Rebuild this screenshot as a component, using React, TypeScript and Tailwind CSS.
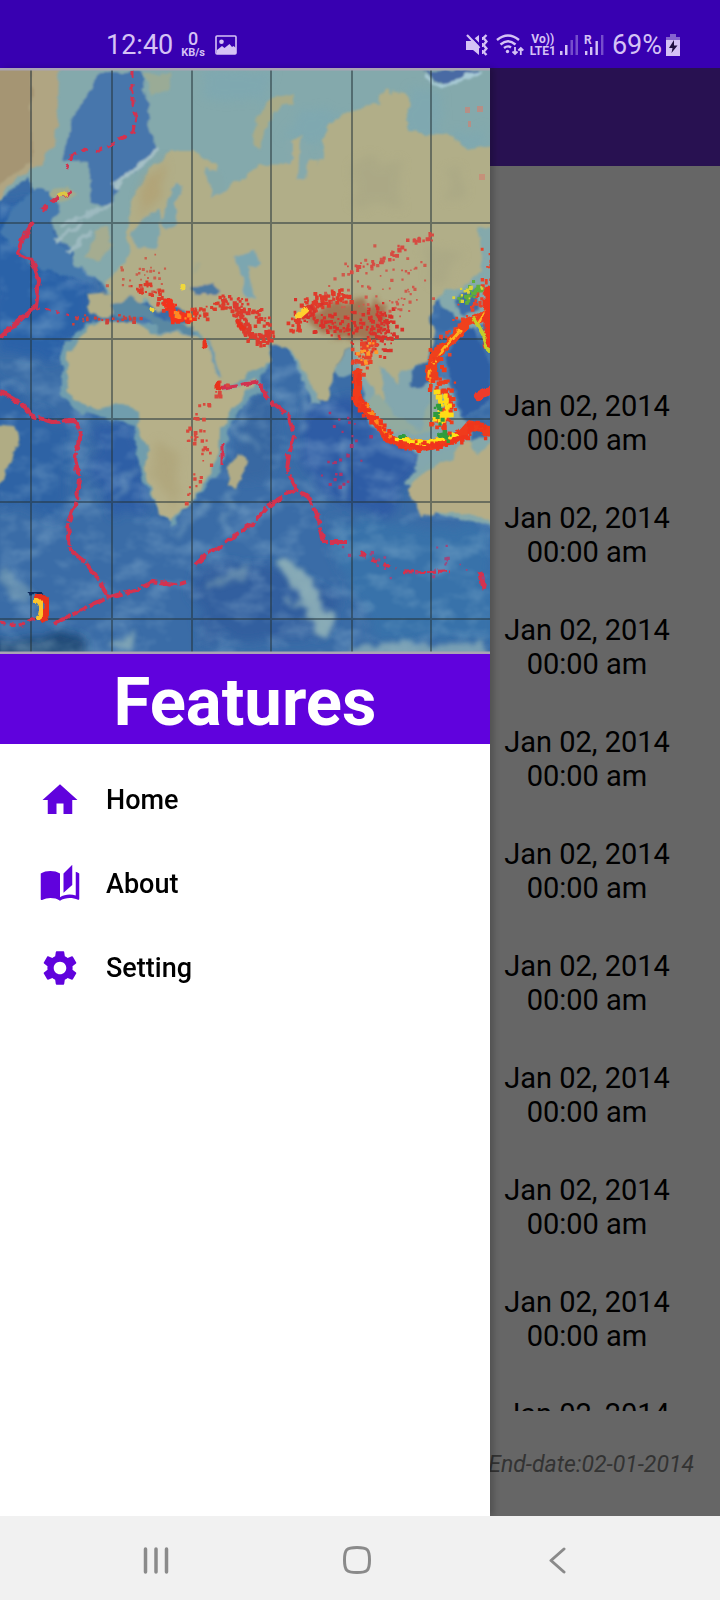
import React from "react";
import { MdAutoStories, MdHome, MdSettings } from "react-icons/md";

type Point = [number, number];

function createRandom(seed: number) {
  let state = seed;
  return () => {
    state = (state * 1664525 + 1013904223) % 4294967296;
    return state / 4294967296;
  };
}

// Small squares spread around a polyline, joined into a single path.
function scatter(line: Point[], count: number, spread: number, size: number, seed: number) {
  const random = createRandom(seed);
  let d = "";
  for (let i = 0; i < count; i++) {
    const t = random() * (line.length - 1);
    const k = Math.floor(t);
    const f = t - k;
    const [ax, ay] = line[k];
    const [bx, by] = line[Math.min(k + 1, line.length - 1)];
    const x = ax + (bx - ax) * f + (random() + random() - 1) * spread;
    const y = ay + (by - ay) * f + (random() + random() - 1) * spread;
    const s = size * (0.6 + random() * 0.8);
    d += `M${x.toFixed(1)} ${y.toFixed(1)}h${s.toFixed(1)}v${s.toFixed(1)}h-${s.toFixed(1)}z`;
  }
  return d;
}

const mediterranean: Point[] = [[135, 288], [150, 288], [162, 300], [172, 313], [190, 316], [205, 310], [225, 300], [240, 318], [250, 335]];
const northAfrica: Point[] = [[75, 318], [104, 318], [125, 318], [140, 318]];
const persia: Point[] = [[225, 298], [238, 310], [246, 330], [262, 341], [268, 330], [258, 312], [235, 300]];
const pamir: Point[] = [[290, 330], [300, 315], [312, 302], [335, 292], [345, 300]];
const tibet: Point[] = [[300, 315], [325, 325], [350, 328], [375, 315], [385, 330], [375, 345]];
const centralAsia: Point[] = [[335, 290], [350, 270], [390, 260], [420, 280], [400, 310], [360, 300]];
const baikal: Point[] = [[345, 270], [385, 258], [405, 242], [432, 235]];
const burma: Point[] = [[372, 345], [360, 350], [360, 370]];
const eastAfrica: Point[] = [[218, 385], [212, 400], [193, 420], [190, 435], [205, 440], [200, 475], [185, 500]];
const indianOcean: Point[] = [[320, 420], [345, 430], [370, 450], [330, 455], [335, 490]];
const japan: Point[] = [[488, 255], [487, 290], [465, 310], [450, 335], [432, 355]];
const alps: Point[] = [[110, 285], [130, 270], [155, 265], [145, 285]];
const sundaArc: Point[] = [[358, 370], [357, 400], [372, 417], [386, 436], [402, 444], [425, 447], [450, 441], [462, 434], [470, 425], [490, 431]];
const philippines: Point[] = [[434, 356], [430, 378], [444, 390], [448, 412], [436, 424]];
const southernRidge: Point[] = [[347, 542], [370, 560], [410, 575], [450, 565], [440, 545], [485, 580]];

const scatters = [
  { d: scatter(mediterranean, 150, 8, 2.8, 3), fill: "#dc3d2c" },
  { d: scatter(northAfrica, 26, 6, 2.8, 17), fill: "#cf4038" },
  { d: scatter([[165, 300], [175, 317], [190, 316]], 75, 6, 3.4, 9), fill: "#f5321c" },
  { d: scatter([[172, 314], [190, 316]], 10, 5, 3, 19), fill: "#ff8a24" },
  { d: scatter(persia, 120, 8, 3, 4), fill: "#dd3a2e" },
  { d: scatter(pamir, 110, 9, 3.2, 5), fill: "#e03a2c" },
  { d: scatter(tibet, 190, 18, 2.8, 6), fill: "#d8332c" },
  { d: scatter(centralAsia, 80, 24, 2.4, 7), fill: "#cf5a4c" },
  { d: scatter(baikal, 40, 5, 3, 8), fill: "#d64b43" },
  { d: scatter(burma, 60, 11, 3.2, 11), fill: "#e8432a" },
  { d: scatter(burma, 14, 8, 3.2, 18), fill: "#ff9a2a" },
  { d: scatter(eastAfrica, 50, 9, 2.8, 12), fill: "#d84a3c" },
  { d: scatter(indianOcean, 26, 16, 2.8, 13), fill: "#a8346a" },
  { d: scatter(japan, 80, 12, 2.8, 14), fill: "#e8432a" },
  { d: scatter(alps, 30, 14, 2.4, 15), fill: "#c9604c" },
  { d: scatter(southernRidge, 22, 10, 2.4, 16), fill: "#a0447c" },
];

const arcSpots = [
  { d: scatter(sundaArc, 110, 7, 3.4, 31), fill: "#f0351c" },
  { d: scatter(philippines, 90, 11, 3.6, 32), fill: "#ee3c1e" },
  { d: scatter([[438, 392], [448, 412], [436, 416]], 40, 7, 3.6, 33), fill: "#ffdc19" },
  { d: scatter([[438, 400], [436, 414], [446, 436]], 14, 6, 3.6, 34), fill: "#2f9c3c" },
  { d: scatter([[458, 298], [478, 286]], 26, 9, 3, 35), fill: "#5fae3a" },
  { d: scatter([[458, 298], [480, 288]], 12, 9, 2.6, 36), fill: "#dcd23a" },
];

function EarthquakeMap() {
  return (
    <svg viewBox="0 68 490 586" className="block w-full" role="img" aria-label="World earthquake map">
      <defs>
        <filter id="coast" x="-5%" y="-5%" width="110%" height="110%">
          <feTurbulence type="fractalNoise" baseFrequency="0.07" numOctaves="3" seed="4" result="n" />
          <feDisplacementMap in="SourceGraphic" in2="n" scale="11" xChannelSelector="R" yChannelSelector="G" />
          <feGaussianBlur stdDeviation="1.3" />
        </filter>
        <filter id="depth" x="-10%" y="-10%" width="120%" height="120%">
          <feTurbulence type="fractalNoise" baseFrequency="0.05" numOctaves="3" seed="8" result="n" />
          <feDisplacementMap in="SourceGraphic" in2="n" scale="22" xChannelSelector="R" yChannelSelector="G" />
          <feGaussianBlur stdDeviation="5" />
        </filter>
        <filter id="cloud" x="-20%" y="-20%" width="140%" height="140%">
          <feTurbulence type="fractalNoise" baseFrequency="0.07" numOctaves="3" seed="6" result="n" />
          <feDisplacementMap in="SourceGraphic" in2="n" scale="22" xChannelSelector="R" yChannelSelector="G" />
          <feGaussianBlur stdDeviation="2.5" />
        </filter>
        <filter id="relief" x="0" y="0" width="100%" height="100%">
          <feTurbulence type="fractalNoise" baseFrequency="0.03 0.05" numOctaves="4" seed="12" />
          <feColorMatrix values="0 0 0 0 0.5  0 0 0 0 0.72  0 0 0 0 0.8  2 0 0 0 -0.9" />
          <feGaussianBlur stdDeviation="1" />
        </filter>
        <filter id="quake" x="-5%" y="-5%" width="110%" height="110%">
          <feTurbulence type="fractalNoise" baseFrequency="0.12" numOctaves="2" seed="2" result="n" />
          <feDisplacementMap in="SourceGraphic" in2="n" scale="6" xChannelSelector="R" yChannelSelector="G" />
          <feGaussianBlur stdDeviation="0.7" />
        </filter>
        <filter id="soften" x="-5%" y="-5%" width="110%" height="110%">
          <feGaussianBlur stdDeviation="0.6" />
        </filter>
      </defs>

      {/* Ocean floor */}
      <rect y="68" width="490" height="586" fill="#3a6ca7" />
      <g filter="url(#depth)">
        <path d="M-20 210L30 200L60 265L95 290L85 330L60 360L0 350Z" fill="#2c62a8" />
        <path d="M-10 375L50 420L75 430L60 520L-10 500Z" fill="#2f64a5" />
        <path d="M90 425L130 420L145 470L150 510L110 520L95 480Z" fill="#2d5fa6" />
        <path d="M245 400L270 390L280 430L265 480L235 480Z" fill="#3768a2" />
        <path d="M305 405L350 395L400 440L440 450L400 490L390 520L330 500L300 460Z" fill="#2f5ba5" />
        <path d="M195 570L265 560L340 600L320 640L200 640Z" fill="#335f9f" />
        <path d="M330 520L490 530L500 640L380 640L340 570Z" fill="#3872aa" />
        <path d="M-10 640L90 635L90 670L-10 670Z" fill="#1d4775" />
      </g>
      <rect y="68" width="490" height="586" filter="url(#relief)" opacity="0.34" />
      <g fill="#94b5b9" filter="url(#cloud)">
        <path d="M278 562C292 550 305 570 312 585C325 598 332 618 334 636C318 630 300 622 305 604C296 585 282 580 278 562Z" opacity="0.85" />
        <path d="M282 598L304 602L302 608Z" opacity="0.8" />
        <path d="M350 650C380 636 410 646 440 646C465 640 480 646 490 646V660H345ZM110 640L140 636L135 650H112Z" opacity="0.7" />
        <path d="M208 578L245 566L248 580L212 588ZM0 570L24 576L30 600L10 600Z" opacity="0.4" />
      </g>
      <path d="M115 500L128 478L142 466M205 500L198 515L175 535M230 490L225 540M302 365L308 405L302 430M344 440V500M250 400L232 430L262 450" stroke="#86aec6" strokeWidth="5" opacity="0.5" fill="none" filter="url(#cloud)" />

      {/* Continental shelves */}
      <g filter="url(#coast)">
        <path d="M-10 58H500V320L470 330L440 300L240 310L110 300L105 286L76 264L72 250L52 228L28 178L-10 208Z" fill="#84a9ac" />
        <path d="M100 72L142 72L146 110L156 152L138 170L118 182L112 206L92 204L90 162L62 160L74 118Z" fill="#4676ac" />
        <path d="M12 208L34 190L50 190L60 212L48 225L58 240L76 262L92 282L40 270L0 235Z" fill="#4479ae" />
        <path d="M60 226L112 205M55 242L85 222M66 254L92 230" stroke="#9dbac0" strokeWidth="4" fill="none" />
        <path d="M114 186L134 170L158 150" stroke="#a5c0c6" strokeWidth="4" fill="none" />
        <path d="M422 70H482L445 84Z" fill="#4a6aa4" />
        <path d="M425 76L442 87L482 72" stroke="#a9cbd6" strokeWidth="4" fill="none" />
        <path d="M352 350L425 355L445 380L470 430L470 460L410 490L420 455L370 425Z" fill="#83a7ae" />
        <path d="M62 350L88 322L200 325L270 350L262 390L230 420L222 470L170 526L142 480L134 425L80 412L62 393Z" fill="#6f9dad" />
        <path d="M405 480L440 452L500 430V530L440 515Z" fill="#84a8ab" />
        <path d="M288 345L300 345L322 405L312 404ZM332 370L352 345L362 365L340 380Z" fill="#7ba3ae" />
      </g>
      <g filter="url(#depth)" opacity="0.55">
        <path d="M205 70H270V100H205ZM300 110H345L330 140H280ZM410 90H440V140H400ZM450 130H480V150H450Z" fill="#7ba8b4" />
      </g>

      {/* Land */}
      <g filter="url(#coast)">
        <path d="M-10 58H60L58 100L56 145L38 166L12 182L0 200H-10Z" fill="#b0a582" />
        <path d="M-10 58H32V160L0 185H-10Z" fill="#a59573" />
        <path d="M142 72H172L168 92L150 95Z" fill="#9aab96" />
        <path d="M50 192L66 184L74 196L56 204Z" fill="#a3ac8c" />
        <path d="M95 230L106 226L112 245L98 262L84 258Z" fill="#a5ac90" />
        <path
          d="M128 226L133 200L150 170L170 150L192 150L218 165L222 192L240 180L258 166L290 165L288 142L300 135L306 162L325 160L325 130L345 112L378 105L386 88L408 96L410 132L450 135L465 150L500 145V225L478 230L482 270L462 290L445 290L432 305L430 318L436 340L425 365L400 372L398 385L388 372L378 362L385 400L378 402L362 368L352 345L337 365L328 402L318 400L302 368L292 350L268 344L270 358L245 376L224 388L212 362L202 336L196 330L170 330L190 320L178 305L158 312L145 298L130 310L108 318L88 316L88 294L112 292L104 282L128 262Z"
          fill="#b1ae88"
        />
        <path d="M150 214L160 208L166 232L176 222L176 205L184 188L174 184L164 214L156 250L136 246L132 230Z" fill="#7fa6ac" />
        <path d="M206 168L222 172L225 190L212 198Z" fill="#84a8aa" />
        <path d="M300 138L312 145L306 180L298 180ZM286 140L292 140V165H286ZM316 144L322 150L318 165Z" fill="#85a9ac" />
        <path d="M253 145L257 118L272 97L294 92L294 102L276 110L267 125L260 150Z" fill="#a9ab88" />
        <path d="M194 262H198V272H194Z" fill="#a9ac8c" />
        <path d="M190 290L212 284L222 290L218 296L195 296Z" fill="#4d79a0" />
        <path d="M233 258L256 250L258 264L248 266L250 278L256 300L246 298L242 275Z" fill="#7ca6b0" />
        <path d="M112 306L130 296L148 306L154 318L190 326L192 333L160 330L142 318L112 316Z" fill="#5a88a2" />
        <path
          d="M92 324L135 320L150 332L195 334L204 340L216 372L226 390L248 382L258 378L246 396L230 412L219 430L218 458L203 486L188 508L168 522L158 512L150 488L144 465L147 450L137 425L136 412L122 406L88 408L72 398L66 380L68 355Z"
          fill="#b6b089"
        />
        <path d="M242 452L246 466L236 490L228 486L228 466Z" fill="#b0ab86" />
        <path d="M-10 424L14 426L20 438L10 465L2 483L-10 488Z" fill="#b0ac84" />
        <path d="M408 488L424 472L450 460L456 448L470 440L478 453L500 435V530L476 516L450 512L420 516L414 504Z" fill="#b5ad86" />
        <path d="M366 400L380 395L400 420L420 430L425 405L435 395L440 415L430 432L395 432L375 420Z" fill="#92ab9f" />
        <path d="M206 340L214 358L221 378" stroke="#6f9cae" strokeWidth="3" fill="none" />
      </g>
      <g filter="url(#depth)" opacity="0.5">
        <path d="M140 185L165 160L160 200L138 222Z" fill="#b29a68" />
        <path d="M355 160H400V205H355ZM448 165H462V200H448ZM425 250L460 250L450 280L430 285Z" fill="#a6a483" />
        <path d="M148 470L160 440L178 450L175 510Z" fill="#ab9f72" />
      </g>
      <path d="M308 316L330 304L362 298L382 306L390 322L380 338L350 342L322 336Z" fill="#965332" opacity="0.6" filter="url(#cloud)" />
      <g filter="url(#coast)">
        <path d="M446 355L462 335L474 326L490 365V400L466 415L452 385Z" fill="#2f5fa4" />
        <path d="M455 300L475 290L480 305L462 318Z" fill="#3d6da8" />
        <path d="M410 372L430 358L428 382L412 388Z" fill="#3b69a2" />
      </g>

      {/* Graticule */}
      <g stroke="#26343a" strokeWidth="2" opacity="0.52" filter="url(#soften)">
        <path d="M31 68V654M112 68V654M192 68V654M271 68V654M352 68V654M431 68V654" />
        <path d="M0 223.010H490M0 339.010H490M0 419.010H490M0 502.010H490M0 619.010H490" />
      </g>

      {/* Plate boundaries */}
      <g filter="url(#quake)" fill="none" stroke="#d3314f" strokeLinejoin="round">
        <path d="M132 70V105L136 115L133 132L112 143L98 151L86 149L72 156L67 168" strokeWidth="3" strokeDasharray="9 5" />
        <path d="M72 192L54 200L42 210" strokeWidth="4" strokeDasharray="10 4" />
        <path d="M33 222L23 238L19 254L32 260L39 280L36 306L18 322L0 337" strokeWidth="4" />
        <path d="M36 308L65 314L85 320" strokeWidth="2" strokeDasharray="4 6" />
        <path d="M0 391L22 404L32 416L52 422L75 421L81 430L78 444L75 458L79 478L77 500L68 522L70 550L85 562L100 582L108 598" strokeWidth="4" strokeDasharray="22 2" />
        <path d="M55 623L80 611L106 598L135 590L152 582L175 585L187 582M195 565L208 553L222 546L236 534L252 524L268 506L294 490" strokeWidth="4" strokeDasharray="16 3" />
        <path d="M220 388L240 385L260 382L267 398L288 415L294 435L289 455L287 470L297 490L310 499L320 525L324 542L347 542" strokeWidth="4" strokeDasharray="18 3" />
        <path d="M360 553L378 562L396 569" strokeWidth="4" strokeDasharray="7 6" />
        <path d="M405 572L450 571" strokeWidth="3" strokeDasharray="9 2" />
        <path d="M481 572L484 590" strokeWidth="5" />
        <path d="M0 622L18 626L36 618" strokeWidth="3" strokeDasharray="6 4" />
        <path d="M222 445V465" strokeWidth="3" />
      </g>
      <path d="M28 593Q42 591 44 600" stroke="#102a5b" strokeWidth="5" fill="none" filter="url(#quake)" />
      <path d="M34 596C46 596 50 606 46 614L40 621" stroke="#e8301e" strokeWidth="8" fill="none" filter="url(#quake)" />
      <path d="M34 599C43 601 43 611 41 615L36 619" stroke="#ffc52b" strokeWidth="5" fill="none" filter="url(#quake)" />
      <g filter="url(#soften)">
        {scatters.map((item, index) => (
          <path key={index} d={item.d} fill={item.fill} />
        ))}
      </g>

      {/* Pacific rim and Sunda arc */}
      <g filter="url(#quake)" fill="none" strokeLinejoin="round" strokeLinecap="round">
        <path d="M358 374L357 400L372 417L386 436L402 444L425 447L450 441L462 434L470 425L490 431" stroke="#f03a1c" strokeWidth="9" />
        <path d="M364 404L378 422L392 438L425 442L452 436" stroke="#fb8c1c" strokeWidth="4" />
        <path d="M396 439L425 443L455 435" stroke="#ffe419" strokeWidth="4" />
        <path d="M492 290L486 315L468 322L452 340L434 356L430 378" stroke="#f0401c" strokeWidth="9" />
        <path d="M486 310L478 322M460 330L444 348L433 362M430 372V382" stroke="#ffb31c" strokeWidth="3" />
        <path d="M488 290V345" stroke="#ee341c" strokeWidth="9" />
        <path d="M474 318L484 336L488 350" stroke="#c3cf2a" strokeWidth="4" />
        <path d="M440 435L448 434M400 436H404" stroke="#2f9c3c" strokeWidth="4" />
        <path d="M478 396L490 390" stroke="#ee3a2a" strokeWidth="8" />
        <path d="M298 316L305 310" stroke="#ffd22e" strokeWidth="6" />
        <path d="M152 309V310M182 288V287" stroke="#f0d83a" strokeWidth="5" />
        <path d="M60 196L66 194" stroke="#dcc845" strokeWidth="4" />
        <path d="M237 322L242 328M204 342V346M218 384V387" stroke="#e8301e" strokeWidth="5" />
      </g>
      <g filter="url(#soften)">
        {arcSpots.map((item, index) => (
          <path key={index} d={item.d} fill={item.fill} />
        ))}
      </g>
      <path d="M465 110H470M477 109H483M468 124H471M479 177H485" stroke="#d08272" strokeWidth="6" opacity="0.65" filter="url(#soften)" />
      <path d="M382 74H391" stroke="#b4b04a" strokeWidth="5" filter="url(#soften)" />
      <path d="M0 69H490M0 653H490" stroke="#aaa3b4" strokeWidth="3" />
    </svg>
  );
}

function StatusBar() {
  return (
    <header className="flex h-[68px] shrink-0 items-end bg-[#3800b1] pr-10 pb-[7px] pl-[106px] text-[#d5c2f5]">
      <div className="flex flex-1 items-center">
        <span className="text-[27px] leading-8">12:40</span>
        <span className="ml-2 flex flex-col items-center">
          <span className="text-lg leading-4 font-medium">0</span>
          <span className="text-[11px] leading-3 font-bold">KB/s</span>
        </span>
        <svg viewBox="0 0 22 20" className="ml-2.5 h-5 w-[22px]" aria-hidden="true">
          <rect x="1" y="1" width="20" height="18" rx="1" fill="none" stroke="currentColor" strokeWidth="1.6" />
          <circle cx="6.5" cy="6.8" r="2.3" fill="currentColor" />
          <path d="M2 15L7 11L9.500 13L14.500 9L17 12L18.500 11L21 13V19H2Z" fill="currentColor" />
        </svg>
      </div>
      <div className="flex items-center">
        <svg viewBox="0 0 22 22" className="h-[22px] w-[22px]" aria-hidden="true">
          <path d="M0 7H5L13 1V21L7 16H0Z" fill="currentColor" />
          <path d="M3 0L15 12.500" stroke="#3800b1" strokeWidth="2.500" />
          <path d="M1 1L13.500 14" stroke="currentColor" strokeWidth="2.200" />
          <path d="M20.500 1L17.500 4L20.500 7.500L17.500 11L20.500 14.500L17.500 18L20.500 21" fill="none" stroke="currentColor" strokeWidth="2.400" />
          <path d="M16.500 3V6M16.500 9V13M16.500 16V20" fill="none" stroke="currentColor" strokeWidth="1" />
        </svg>
        <svg viewBox="0 0 28 22" className="ml-2 h-[22px] w-7" aria-hidden="true">
          <path d="M1 6Q12 -3 23 6M4.500 10.500Q12 4 19.500 10.500M8 14Q12 11 15 13.500" fill="none" stroke="currentColor" strokeWidth="2.400" />
          <circle cx="11.500" cy="17.500" r="1.700" fill="currentColor" />
          <path d="M19 13V20M16.500 17.500L19 20L21.500 17.500M24.800 21V14M22.300 16.500L24.800 14L27.300 16.500" fill="none" stroke="currentColor" strokeWidth="1.800" />
        </svg>
        <span className="ml-1.5 flex flex-col items-center text-xs leading-3 font-bold">
          <span>Vo))</span>
          <span>LTE1</span>
        </span>
        <svg viewBox="0 0 18 22" className="ml-1 h-[22px] w-[18px]" fill="currentColor" aria-hidden="true">
          <rect x="0" y="17" width="2.500" height="4" />
          <rect x="5" y="11" width="2.500" height="10" />
          <rect x="10.500" y="6" width="2.500" height="15" opacity="0.4" />
          <rect x="15.500" y="1" width="2.500" height="20" opacity="0.4" />
        </svg>
        <span className="ml-1.5 flex items-start">
          <span className="w-1.5 text-xs leading-3 font-bold">R</span>
          <svg viewBox="0 0 20 22" className="-ml-1.5 h-[22px] w-5" fill="currentColor" aria-hidden="true">
            <rect x="1" y="17" width="2.400" height="4" />
            <rect x="6" y="13" width="2.400" height="8" />
            <rect x="11.500" y="7" width="2.400" height="14" />
            <rect x="17" y="1" width="2.400" height="20" opacity="0.4" />
          </svg>
        </span>
        <span className="ml-2 text-[27px] leading-8">69%</span>
        <svg viewBox="0 0 14 22" className="ml-1 h-[22px] w-3.5" aria-hidden="true">
          <path d="M0 3H4V0H10V3H14V7H0Z" fill="#8562cf" />
          <path d="M0 6H14V22H0Z" fill="currentColor" />
          <path d="M8 6L3 14H6.500L5.500 19L11.500 11.500H8Z" fill="#20103f" />
        </svg>
      </div>
    </header>
  );
}

const records = Array.from({ length: 10 }, () => ({ date: "Jan 02, 2014", time: "00:00 am" }));

const links = [
  { label: "Home", Icon: MdHome },
  { label: "About", Icon: MdAutoStories },
  { label: "Setting", Icon: MdSettings },
];

export default function App() {
  return (
    <div className="flex h-screen flex-col overflow-hidden bg-white font-['Roboto',sans-serif]">
      <StatusBar />
      <div className="relative flex min-h-0 flex-1 flex-col bg-[#666666]">
        <div className="h-[98px] shrink-0 bg-[#281151]" />
        <main className="flex min-h-0 flex-1 flex-col pt-[201px]">
          <ul className="ml-auto min-h-0 w-[266px] flex-1 overflow-hidden text-center text-[29px] leading-[34px] text-black">
            {records.map((record, index) => (
              <li key={index} className="py-[22px]">
                <p>{record.date}</p>
                <p>{record.time}</p>
              </li>
            ))}
          </ul>
          <p className="h-[105px] shrink-0 pt-10 pr-[26px] text-right text-[23px] leading-7 text-[#333333] italic">
            End-date:02-01-2014
          </p>
        </main>

        <aside className="absolute inset-y-0 left-0 flex w-[490px] flex-col bg-white shadow-[4px_0_6px_rgba(0,0,0,0.2)]">
          <EarthquakeMap />
          <h1 className="bg-[#6002dd] pt-1.5 text-center text-[67px] leading-[84px] font-bold text-white">Features</h1>
          <nav className="flex flex-col pt-[14px]">
            {links.map(({ label, Icon }) => (
              <a key={label} href={`#${label.toLowerCase()}`} className="flex h-[84px] items-center gap-[25px] pl-[39px] text-[27px] font-medium text-black">
                <Icon className="size-[42px] shrink-0 text-[#6002dd]" aria-hidden="true" />
                {label}
              </a>
            ))}
          </nav>
        </aside>
      </div>

      <footer className="relative flex h-[84px] shrink-0 items-center justify-around bg-[#f1f1f1] pt-1 pr-[62px] pl-14 text-[#8a8a8a]">
        <button type="button" aria-label="Recent apps" className="p-2">
          <svg viewBox="0 0 28 28" className="size-7" fill="none" stroke="currentColor" strokeWidth="3.500" strokeLinecap="round">
            <path d="M3.500 3V26M14 3V26M24.500 3V26" />
          </svg>
        </button>
        <button type="button" aria-label="Home screen" className="p-2">
          <svg viewBox="0 0 30 30" className="size-[30px]" fill="none" stroke="currentColor" strokeWidth="3">
            <path d="M15 2.500C25.500 2.500 27.500 4.500 27.500 15S25.500 27.500 15 27.500S2.500 25.500 2.500 15S4.500 2.500 15 2.500Z" />
          </svg>
        </button>
        <button type="button" aria-label="Back" className="p-2">
          <svg viewBox="0 0 28 28" className="size-7" fill="none" stroke="currentColor" strokeWidth="3" strokeLinecap="round" strokeLinejoin="round">
            <path d="M20 3L7 14.500L20 26" />
          </svg>
        </button>
      </footer>
    </div>
  );
}
